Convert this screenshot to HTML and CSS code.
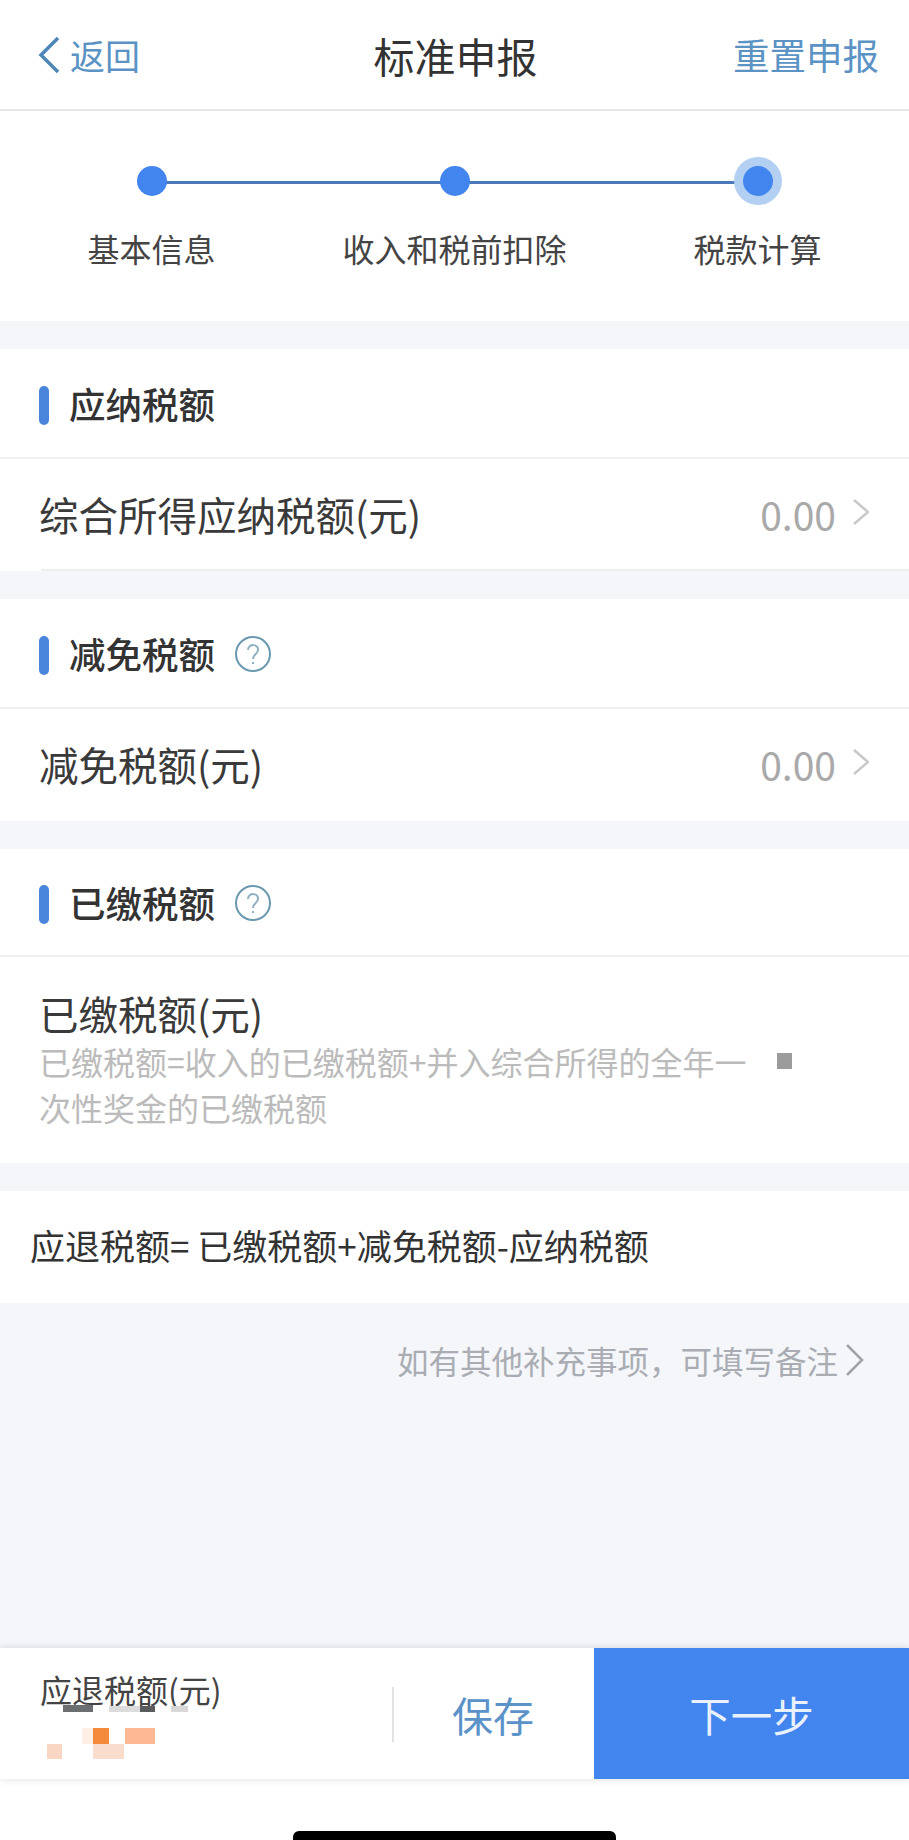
FILE: index.html
```html
<!DOCTYPE html>
<html lang="zh-CN">
<head>
  <meta charset="UTF-8" />
  <meta name="viewport" content="width=device-width, initial-scale=1.0"/>
  <title>标准申报</title>
  <link rel="stylesheet" href="styles.css">
</head>
<body>
  <header class="topbar">
    <a class="back">
      <svg class="back-icon" width="22" height="38" viewBox="0 0 22 38"><path d="M20 2 L3 19 L20 36" /></svg>
      返回
    </a>
    <h1 class="page-title">标准申报</h1>
    <a class="reset">重置申报</a>
  </header>

  <div class="steps">
    <div class="step"><span class="dot"></span><span class="step-label">基本信息</span></div>
    <div class="step"><span class="dot"></span><span class="step-label">收入和税前扣除</span></div>
    <div class="step step-active"><span class="dot"></span><span class="step-label">税款计算</span></div>
  </div>

  <section class="card">
    <div class="card-head"><span class="mark"></span><h2>应纳税额</h2></div>
    <div class="row row-line">
      <span class="row-name">综合所得应纳税额(元)</span>
      <span class="row-value">0.00</span>
      <svg class="row-arrow" width="16" height="26" viewBox="0 0 16 26"><path d="M1 1 L15 13 L1 25" /></svg>
    </div>
  </section>

  <section class="card">
    <div class="card-head">
      <span class="mark"></span><h2>减免税额</h2>
      <svg class="help" width="36" height="36" viewBox="0 0 36 36"><circle cx="18" cy="18" r="17" /><path d="M13 14 C13 7 24 8 23 14 C23 18 18 18 18 23" /><path class="help-dot" d="M18 26 V28" /></svg>
    </div>
    <div class="row">
      <span class="row-name">减免税额(元)</span>
      <span class="row-value">0.00</span>
      <svg class="row-arrow" width="16" height="26" viewBox="0 0 16 26"><path d="M1 1 L15 13 L1 25" /></svg>
    </div>
  </section>

  <section class="card">
    <div class="card-head card-head-short">
      <span class="mark"></span><h2>已缴税额</h2>
      <svg class="help" width="36" height="36" viewBox="0 0 36 36"><circle cx="18" cy="18" r="17" /><path d="M13 14 C13 7 24 8 23 14 C23 18 18 18 18 23" /><path class="help-dot" d="M18 26 V28" /></svg>
    </div>
    <div class="paid">
      <div class="row-name">已缴税额(元)</div>
      <div class="paid-note">
        <p>已缴税额=收入的已缴税额+并入综合所得的全年一次性奖金的已缴税额</p>
        <span class="smudge"></span>
      </div>
    </div>
  </section>

  <section class="card formula">应退税额= 已缴税额+减免税额-应纳税额</section>

  <main class="remark-area">
    <div class="remark">
      如有其他补充事项，可填写备注
      <svg class="remark-arrow" width="20" height="32" viewBox="0 0 20 32"><path d="M2 1 L17 16 L2 31" /></svg>
    </div>
  </main>

  <footer class="bottombar">
    <div class="refund">
      <span class="refund-label">应退税额(元)</span>
      <!-- mosaic over the amount -->
      <div class="mosaic">
        <i class="m1"></i><i class="m2"></i><i class="m3"></i><i class="m4"></i>
        <i class="m5"></i><i class="m6"></i><i class="m7"></i><i class="m8"></i><i class="m9"></i>
      </div>
    </div>
    <button class="save" type="button">保存</button>
    <button class="next" type="button">下一步</button>
  </footer>

  <div class="home-strip"><span class="home-bar"></span></div>
</body>
</html>
```

FILE: styles.css
```css
* {
  box-sizing: border-box;
}

html, body {
  height: 100%;
}

body {
  margin: 0;
  display: flex;
  flex-direction: column;
  background: #f5f6fa;
  color: #333;
  font-family: "Noto Sans CJK SC", "Liberation Sans", sans-serif;
  overflow: hidden;
}

svg path, svg circle {
  fill: none;
}

/* top bar */
.topbar {
  height: 111px;
  padding: 0 30px 0 32px;
  display: grid;
  grid-template-columns: 1fr auto 1fr;
  align-items: center;
  background: #fff;
  border-bottom: 2px solid #e6e6e8;
}

.back {
  margin-left: 6px;
  display: flex;
  align-items: center;
  gap: 10px;
  font-size: 35px;
  line-height: 40px;
  color: #5b93c4;
}

.back-icon path {
  stroke: #4f86b8;
  stroke-width: 3.5;
}

.page-title {
  margin: 0;
  font-size: 41px;
  font-weight: 400;
  line-height: 48px;
  color: #333;
}

.reset {
  justify-self: end;
  font-size: 36.5px;
  line-height: 40px;
  color: #5b93c4;
}

/* steps */
.steps {
  height: 210px;
  padding-top: 55px;
  display: grid;
  grid-template-columns: repeat(3, 1fr);
  background: #fff;
}

.step {
  position: relative;
  display: flex;
  flex-direction: column;
  align-items: center;
  gap: 30px;
}

.step:not(:last-child)::after {
  content: "";
  position: absolute;
  top: 15px;
  left: 50%;
  width: 100%;
  height: 3px;
  background: #4a78b8;
}

.dot {
  position: relative;
  z-index: 1;
  width: 30px;
  height: 30px;
  border-radius: 50%;
  background: #4285ee;
}

.step-active .dot {
  box-shadow: 0 0 0 9px #b3d0f3;
}

.step-label {
  font-size: 32px;
  line-height: 44px;
  color: #444;
}

/* cards */
.card {
  margin-top: 28px;
  background: #fff;
}

.card-head {
  height: 110px;
  padding: 2px 0 0 39px;
  display: flex;
  align-items: center;
  border-bottom: 2px solid #f1f1f3;
}

.card-head-short {
  height: 108px;
}

.card-head h2 {
  margin: 0 20px 0 20px;
  font-size: 36.5px;
  font-weight: 500;
  line-height: 44px;
  color: #333;
}

.mark {
  width: 10px;
  height: 39px;
  margin-top: 2px;
  border-radius: 5px;
  background: #4a85dc;
}

.help circle, .help path {
  stroke: #6a98ae;
  stroke-width: 2;
}

.help path {
  stroke: #8fb0c2;
}

.row {
  height: 112px;
  padding: 0 40px 3px 39px;
  display: flex;
  align-items: center;
}

.row-line {
  position: relative;
}

.row-line::after {
  content: "";
  position: absolute;
  left: 41px;
  right: 0;
  bottom: 0;
  height: 2px;
  background: #eeeef1;
}

.row-name {
  font-size: 39.5px;
  line-height: 50px;
  color: #3a3a3a;
}

.row-value {
  margin-left: auto;
  font-size: 39px;
  line-height: 50px;
  color: #a9a9a9;
}

.row-arrow {
  margin: -4px 0 0 17px;
}

.row-arrow path {
  stroke: #c8c8c8;
  stroke-width: 2.5;
}

.paid {
  height: 206px;
  padding: 31px 39px 0;
}

.paid-note {
  display: flex;
  align-items: flex-start;
}

.paid-note p {
  width: 712px;
  margin: 0;
  font-size: 32px;
  line-height: 46px;
  color: #bbb;
}

.smudge {
  width: 15px;
  height: 16px;
  margin: 15px 0 0 26px;
  background: #9b9b9b;
}

.formula {
  height: 112px;
  padding: 0 0 5px 30px;
  display: flex;
  align-items: center;
  font-size: 35px;
  color: #333;
}

/* remark */
.remark-area {
  flex: 1;
  padding: 36px 44px 0 0;
}

.remark {
  display: flex;
  align-items: center;
  justify-content: flex-end;
  gap: 7px;
  font-size: 31.5px;
  line-height: 42px;
  color: #a9adb3;
}

.remark-arrow path {
  stroke: #a0a4aa;
  stroke-width: 2.5;
}

/* bottom bar */
.bottombar {
  height: 131px;
  display: flex;
  background: #fff;
  box-shadow: 0 0 8px rgba(0, 0, 0, 0.14);
  position: relative;
  z-index: 1;
}

.refund {
  position: relative;
  width: 392px;
  padding: 21px 0 0 40px;
}

.refund-label {
  font-size: 32px;
  line-height: 40px;
  color: #444;
}

.mosaic {
  position: absolute;
  inset: 0;
}

.mosaic i {
  position: absolute;
  display: block;
}

.m1 { left: 63px; top: 57px; width: 30px; height: 7px; background: #6b6f72; }
.m2 { left: 109px; top: 58px; width: 31px; height: 6px; background: #dcdcdc; }
.m3 { left: 140px; top: 58px; width: 15px; height: 6px; background: #5a5c5e; }
.m4 { left: 171px; top: 58px; width: 17px; height: 6px; background: #d8d8d8; }
.m5 { left: 93px; top: 80px; width: 16px; height: 16px; background: #f58a3c; }
.m6 { left: 125px; top: 80px; width: 30px; height: 16px; background: #fdb994; }
.m7 { left: 47px; top: 96px; width: 15px; height: 15px; background: #f9d6c3; }
.m8 { left: 93px; top: 96px; width: 31px; height: 15px; background: #fadccd; }
.m9 { left: 82px; top: 80px; width: 11px; height: 16px; background: #fdeee6; }

.save, .next {
  border: none;
  font-family: inherit;
}

.save {
  position: relative;
  width: 202px;
  font-size: 41px;
  background: #fff;
  color: #5b92c8;
}

.save::before {
  content: "";
  position: absolute;
  left: 0;
  top: 39px;
  width: 2px;
  height: 55px;
  background: #e2e2e2;
}

.next {
  flex: 1;
  font-size: 41.5px;
  background: #4285ee;
  color: #e8f1fd;
}

/* home indicator */
.home-strip {
  height: 61px;
  display: flex;
  align-items: flex-end;
  justify-content: center;
  background: #fff;
}

.home-bar {
  width: 323px;
  height: 9px;
  border-radius: 6px 6px 0 0;
  background: #000;
}
```
